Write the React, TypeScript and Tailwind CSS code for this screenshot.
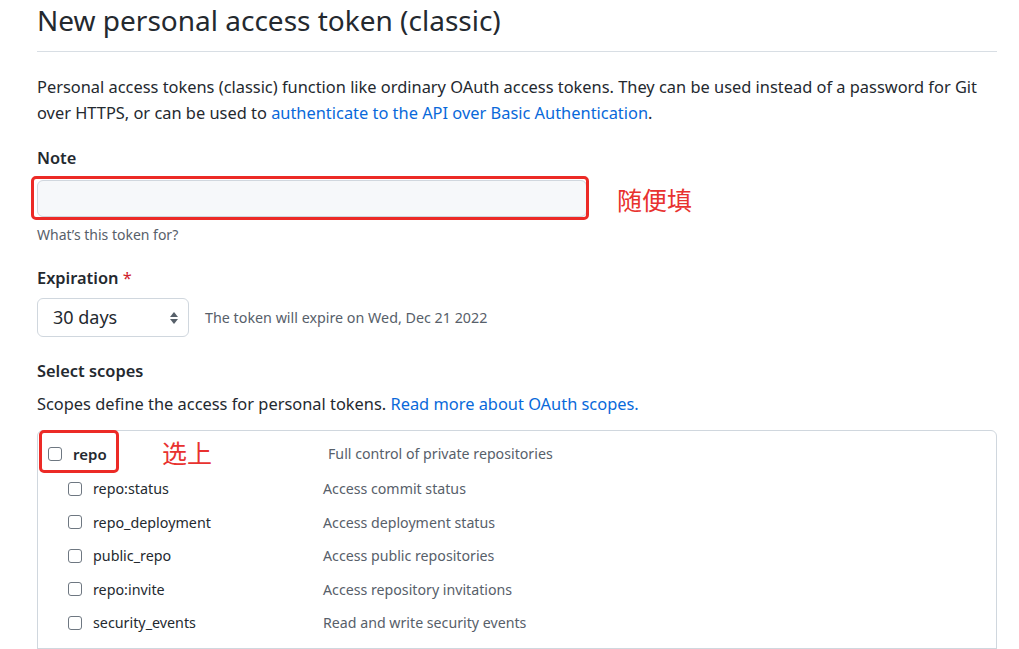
import React from 'react';

const scopes = [
  { name: 'repo:status', desc: 'Access commit status' },
  { name: 'repo_deployment', desc: 'Access deployment status' },
  { name: 'public_repo', desc: 'Access public repositories' },
  { name: 'repo:invite', desc: 'Access repository invitations' },
  { name: 'security_events', desc: 'Read and write security events' },
];

const Checkbox = () => (
  <span className="inline-block w-[14px] h-[14px] rounded-[3px] border border-[#6e7781] bg-white shrink-0" />
);

const App: React.FC = () => {
  return (
    <div className="w-[1019px] h-[649px] overflow-hidden bg-white text-[#24292f] font-['Noto_Sans',sans-serif]">
      <div className="pl-[37px] pr-[22px]">
        <div className="pt-[2px] pb-[13px] border-b border-[#d8dee4]">
          <h1 className="text-[28px] leading-[36px] font-normal">New personal access token (classic)</h1>
        </div>

        <p className="mt-[22px] text-[16.4px] leading-[26px]">
          Personal access tokens (classic) function like ordinary OAuth access tokens. They can be used instead of a password for Git over HTTPS, or can be used to{' '}
          <a className="text-[#0969da]">authenticate to the API over Basic Authentication</a>.
        </p>

        <div className="mt-[20px] text-[16.4px] leading-[24px] font-semibold">Note</div>
        <div className="mt-[10px] flex items-center">
          <div className="relative">
            <div className="w-[550px] h-[37px] rounded-[6px] bg-[#f6f8fa] border border-[#d0d7de]" />
            <div className="absolute -left-[6px] -top-[4px] w-[558px] h-[44px] rounded-[5px] border-[3px] border-[#ec2a26]" />
          </div>
          <span className="ml-[30px] text-[25px] leading-[30px] text-[#e8322f] font-['Noto_Sans_CJK_SC',sans-serif]">随便填</span>
        </div>
        <div className="mt-[8px] text-[14px] leading-[20px] text-[#57606a]">What’s this token for?</div>

        <div className="mt-[21px] text-[16.4px] leading-[24px] font-semibold">
          Expiration <span className="text-[#cf222e] font-normal">*</span>
        </div>
        <div className="mt-[8px] flex items-center">
          <div className="w-[152px] h-[39px] rounded-[6px] border border-[#d0d7de] flex items-center justify-between pl-[15px] pr-[9px]">
            <span className="text-[18px]">30 days</span>
            <svg width="10" height="14" viewBox="0 0 10 14" className="text-[#57606a]">
              <path d="M5 1 L9 6 H1 Z" fill="currentColor" />
              <path d="M5 13 L9 8 H1 Z" fill="currentColor" />
            </svg>
          </div>
          <span className="ml-[16px] text-[14.3px] text-[#57606a]">The token will expire on Wed, Dec 21 2022</span>
        </div>

        <div className="mt-[22px] text-[16.4px] leading-[24px] font-semibold">Select scopes</div>
        <p className="mt-[8px] text-[16.4px] leading-[26px]">
          Scopes define the access for personal tokens. <a className="text-[#0969da]">Read more about OAuth scopes.</a>
        </p>

        <div className="mt-[13px] border border-[#d0d7de] rounded-t-[6px] pt-[11px]">
          <div className="h-[24px] flex items-center relative">
            <div className="w-[10px]" />
            <Checkbox />
            <span className="ml-[11px] text-[15px] font-semibold w-[255px]">repo</span>
            <span className="text-[14.2px] text-[#57606a]">Full control of private repositories</span>
            <div className="absolute left-[1px] -top-[12px] w-[80px] h-[43px] rounded-[5px] border-[3px] border-[#ec2a26]" />
            <span className="absolute left-[124px] top-[-5px] text-[25px] leading-[30px] text-[#e8322f] font-['Noto_Sans_CJK_SC',sans-serif]">选上</span>
          </div>
          <div className="mt-[6px]">
            {scopes.map((s) => (
              <div key={s.name} className="h-[33.5px] flex items-center pl-[30px]">
                <Checkbox />
                <span className="ml-[11px] text-[14.3px] w-[230px]">{s.name}</span>
                <span className="text-[14.2px] text-[#57606a]">{s.desc}</span>
              </div>
            ))}
          </div>
          <div className="mt-[8px] border-t border-[#d0d7de] h-[20px]" />
        </div>
      </div>
    </div>
  );
};

export default App;
